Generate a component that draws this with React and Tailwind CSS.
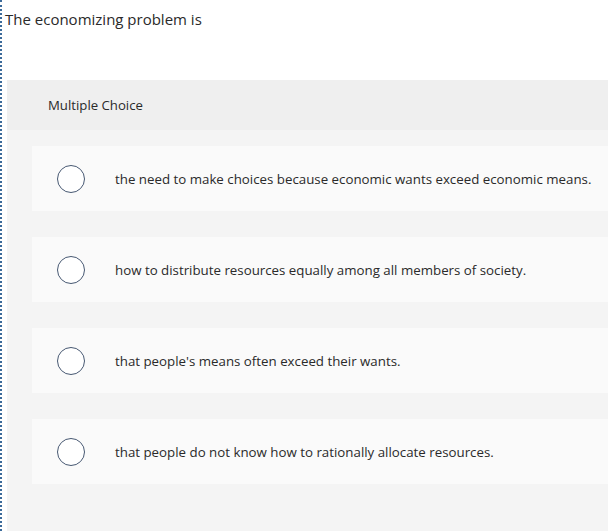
export default function App() {
  const options = [
    "the need to make choices because economic wants exceed economic means.",
    "how to distribute resources equally among all members of society.",
    "that people's means often exceed their wants.",
    "that people do not know how to rationally allocate resources.",
  ];
  return (
    <div className="w-[608px] h-[531px] bg-white flex flex-col overflow-hidden border-l-2 border-dotted border-[#3b6a9a]" style={{ fontFamily: "'Open Sans', sans-serif" }}>
      <div className="h-[80px] pl-[3px] pt-[8px] text-[15px] text-[#2a2a2a]">The economizing problem is</div>
      <div className="ml-[5px] flex-1 bg-[#f4f4f4] flex flex-col">
        <div className="h-[50px] bg-[#efefef] pl-[41px] pt-[1px] flex items-center text-[13.2px] text-[#2a2a2a]">Multiple Choice</div>
        <div className="pt-[16px] pl-[25px] flex flex-col gap-[26px]">
          {options.map((o) => (
            <div key={o} className="h-[65px] bg-[#fafafa] flex items-center">
              <div className="ml-[25px] w-[28px] h-[28px] rounded-full border-[1.5px] border-[#475872] bg-white shrink-0" />
              <div className="ml-[30px] pt-[2px] text-[13.3px] text-[#2a2a2a]">{o}</div>
            </div>
          ))}
        </div>
      </div>
    </div>
  );
}
